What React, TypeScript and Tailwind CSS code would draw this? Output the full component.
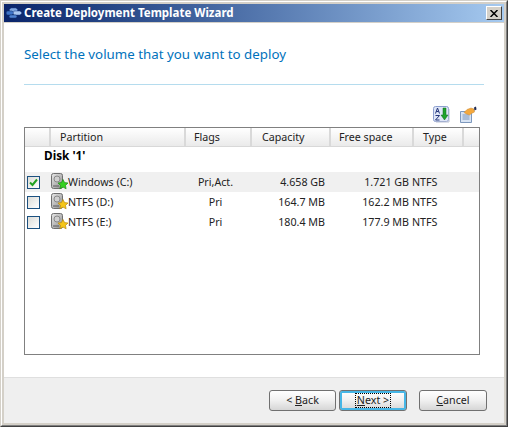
const rows = [
  { name: "Windows (C:)", flags: "Pri,Act.", capacity: "4.658 GB", free: "1.721 GB", type: "NTFS", checked: true },
  { name: "NTFS (D:)", flags: "Pri", capacity: "164.7 MB", free: "162.2 MB", type: "NTFS", checked: false },
  { name: "NTFS (E:)", flags: "Pri", capacity: "180.4 MB", free: "177.9 MB", type: "NTFS", checked: false },
];

const columns = [
  { label: "", className: "w-[26px]" },
  { label: "Partition", className: "w-[135px] pl-[9px]" },
  { label: "Flags", className: "w-[66px] pl-[8px]" },
  { label: "Capacity", className: "w-[79px] pl-[10px]" },
  { label: "Free space", className: "w-[83px] pl-[8px]" },
  { label: "Type", className: "w-[50px] pl-[9px]" },
  { label: "", className: "flex-1" },
];

function WizardIcon() {
  return (
    <svg width="16" height="12" viewBox="0 0 16 12" className="shrink-0">
      <path d="M5 1h5l2 2-2 2H5L3 3z" fill="#7fa6e0" stroke="#1c3f8a" strokeWidth="0.5" />
      <path d="M1 4h5l2 2-2 2H1L0 6z" fill="#3f74c8" stroke="#12306e" strokeWidth="0.5" />
      <path d="M8 4h6l2 2-2 2H8L7 6z" fill="#a9c6ef" stroke="#1c3f8a" strokeWidth="0.5" />
      <path d="M4 8h6l1 1.5L10 11H4L3 9.500z" fill="#4f82d2" stroke="#12306e" strokeWidth="0.5" />
    </svg>
  );
}

function SortIcon() {
  return (
    <svg width="17" height="17" viewBox="0 0 17 17">
      <rect x="0.500" y="0.500" width="15" height="15" rx="2" fill="#dfe6f7" stroke="#8d9fcf" />
      <path d="M16 3v13M3 16h13" stroke="#b9c0d2" />
      <path d="M2.500 7.500L4.500 2l2 5.500M3.300 5.500h2.400" fill="none" stroke="#23357a" />
      <path d="M2.500 9.500h4l-4 4.500h4" fill="none" stroke="#23357a" />
      <path d="M10 2h3v7h2l-3.500 5L8 9h2z" fill="#1fa32c" stroke="#0c6b18" strokeWidth="0.500" />
    </svg>
  );
}

function PropsIcon() {
  return (
    <svg width="17" height="17" viewBox="0 0 17 17">
      <path d="M0.500 5.500h11v11h-11z" fill="#d8e4f4" stroke="#7d98bd" />
      <path d="M2.500 9h7M2.500 11h7M2.500 13h7" stroke="#7a94b8" />
      <path d="M4 6.500L7 3.500 11 2l3 1 .5 3-3 1.500-2 1.500-3-1z" fill="#f4a83c" stroke="#c98a3a" strokeWidth="0.500" />
      <path d="M14 1.500l2-1 .5 3-2 1z" fill="#1f2a52" />
    </svg>
  );
}

function DiskIcon({ green }: { green: boolean }) {
  const star = "M12 6.500l1.600 3.100 3.400.4-2.500 2.400.6 3.400-3.100-1.700-3.100 1.700.6-3.400-2.500-2.400 3.400-.4z";
  return (
    <svg width="17" height="18" viewBox="0 0 17 18" className="shrink-0">
      <defs>
        <linearGradient id="disk" x1="0" y1="0" x2="1" y2="1">
          <stop offset="0" stopColor="#e8e8e8" />
          <stop offset="1" stopColor="#8e8e8e" />
        </linearGradient>
      </defs>
      <rect x="0.500" y="0.500" width="11" height="15" rx="2" fill="url(#disk)" stroke="#6f6f6f" />
      <circle cx="6" cy="6" r="3" fill="#cfcfcf" stroke="#8a8a8a" />
      <path d="M2 13h6" stroke="#5d5d5d" />
      <path d={star} fill={green ? "#35d020" : "#f5c518"} stroke={green ? "#1f8a14" : "#b98a10"} strokeWidth="0.700" />
    </svg>
  );
}

function Checkbox({ checked }: { checked: boolean }) {
  return (
    <div className="w-[13px] h-[13px] border border-[#1c5180] bg-gradient-to-br from-[#dcdcd7] to-white flex items-center justify-center">
      {checked && (
        <svg width="9" height="9" viewBox="0 0 9 9">
          <path d="M1 4.500l2.500 2.500L8 1.500" fill="none" stroke="#21a121" strokeWidth="2" />
        </svg>
      )}
    </div>
  );
}

function Button({ children, focused, className }: { children: React.ReactNode; focused?: boolean; className: string }) {
  return (
    <button
      type="button"
      className={
        "h-[21px] rounded-[3px] border border-[#707070] bg-gradient-to-b from-white via-[#f0f0f0] to-[#d6d6d6] flex items-center justify-center " +
        className +
        (focused ? " border-[#2a6f9a] shadow-[inset_0_0_0_2px_#46b6e6]" : "")
      }
    >
      <span className={focused ? "w-[36px] h-[15px] border border-dotted border-black flex items-center justify-center whitespace-pre" : "leading-[13px]"}>{children}</span>
    </button>
  );
}

export default function App() {
  return (
    <div className="w-[508px] h-[427px] border-t border-l border-t-[#d4d0c8] border-l-[#d4d0c8] border-r border-b border-r-[#404040] border-b-[#404040] text-[10.700px] text-[#222] font-['Noto_Sans',sans-serif] leading-none">
      <div className="h-full border-t border-l border-t-white border-l-white border-r border-b border-r-[#808080] border-b-[#808080]">
        <div className="h-full border-2 border-[#d4d0c8] flex flex-col bg-[#d4d0c8]">
          <div className="h-[18px] shrink-0 flex items-center pl-[2px] pr-[2px] gap-[2px] bg-gradient-to-r from-[#0a246a] to-[#a6caf0]">
            <WizardIcon />
            <span className="flex-1 text-white font-bold text-[11.500px] whitespace-nowrap">
              Create Deployment Template Wizard
            </span>
            <div className="w-[16px] h-[14px] bg-[#d4d0c8] border border-t-white border-l-white border-r-[#404040] border-b-[#404040] flex items-center justify-center">
              <svg width="8" height="7" viewBox="0 0 8 7">
                <path d="M0.500 0L7.500 7M7.500 0L0.500 7" stroke="#000" strokeWidth="1.500" />
              </svg>
            </div>
          </div>
          <div className="mt-[1px] h-[354px] shrink-0 bg-white flex flex-col pl-[20px] pr-[20px]">
            <h1 className="mt-[22px] h-[18px] text-[13.300px] leading-[18px] text-[#0072bc] whitespace-nowrap">
              Select the volume that you want to deploy
            </h1>
            <div className="mt-[21px] h-px bg-[#b5dcee]" />
            <div className="mt-[21px] h-[17px] flex justify-end gap-[10px] pr-[7px]">
              <SortIcon />
              <PropsIcon />
            </div>
            <div className="mt-[4px] w-[456px] h-[228px] border border-[#808080] flex flex-col">
              <div className="h-[19px] shrink-0 flex border-b border-[#d8d8d8] bg-gradient-to-b from-white to-[#eaeaea]">
                {columns.map((col, i) => (
                  <div key={i} className={"flex items-center border-r-2 border-[#d9d9d9] last:border-r-0 " + col.className}>
                    {col.label}
                  </div>
                ))}
              </div>
              <div className="h-[25px] shrink-0 pl-[19px] pb-[7px] flex items-center font-bold text-[11.800px] text-black">
                Disk '1'
              </div>
              {rows.map((row) => (
                <div key={row.name} className={"h-[20px] shrink-0 flex items-center " + (row.checked ? "bg-[#f0f0f0]" : "")}>
                  <div className="w-[26px] pl-[2px]">
                    <Checkbox checked={row.checked} />
                  </div>
                  <div className="w-[135px] flex items-center">
                    <DiskIcon green={row.checked} />
                    <span>{row.name}</span>
                  </div>
                  <div className="w-[59px] text-center">{row.flags}</div>
                  <div className="w-[80px] text-right">{row.capacity}</div>
                  <div className="w-[84px] text-right">{row.free}</div>
                  <div className="pl-[3px]">{row.type}</div>
                </div>
              ))}
            </div>
          </div>
          <div className="flex-1 bg-[#efefef] border-t border-[#dfdfdf] flex items-start pt-[12px] pl-[265px]">
            <Button className="w-[67px]">
              &lt; <u>B</u>ack
            </Button>
            <Button focused className="w-[68px] ml-[3px]">
              <u>N</u>ext &gt;
            </Button>
            <Button className="w-[68px] ml-[12px]">
              <u>C</u>ancel
            </Button>
          </div>
        </div>
      </div>
    </div>
  );
}
